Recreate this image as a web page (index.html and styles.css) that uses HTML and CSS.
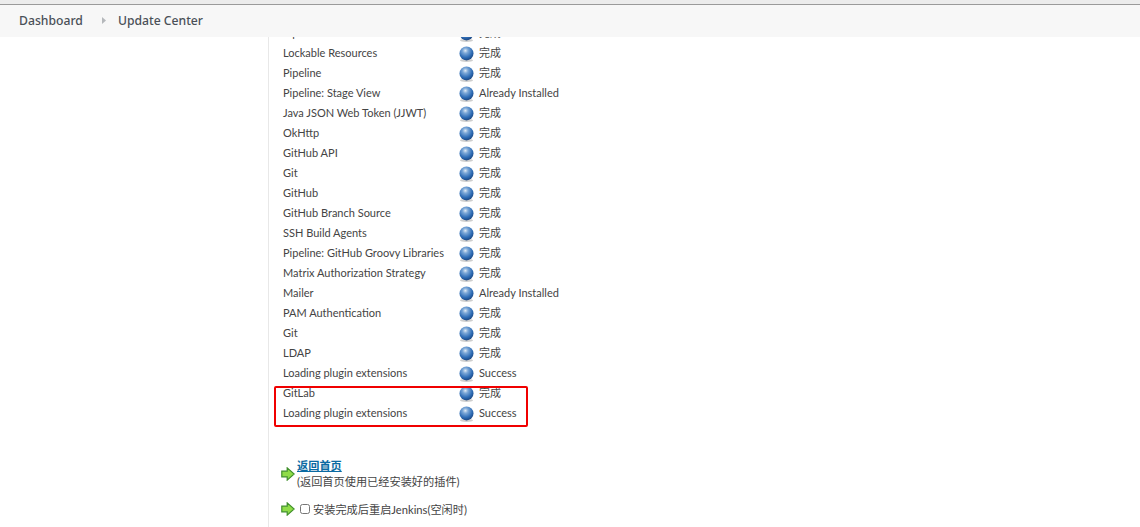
FILE: index.html
```html
<!DOCTYPE html>
<html lang="zh">
<head>
<meta charset="utf-8">
<title>Update Center</title>
<link rel="stylesheet" href="styles.css">
</head>
<body>
<div class="topstrip"></div>
<nav class="crumbs">
  <a class="crumb">Dashboard</a>
  <svg class="sep" width="4" height="7" viewBox="0 0 4 7"><path d="M0 0l4 3.5L0 7z" fill="#b5b8bb"/></svg>
  <a class="crumb">Update Center</a>
</nav>
<div class="main">
  <aside class="side"></aside>
  <section class="content">
    <svg width="0" height="0" class="defs">
      <defs>
        <radialGradient id="ball" cx="0.42" cy="0.3" r="0.75">
          <stop offset="0" stop-color="#dfeaf5"/>
          <stop offset="0.25" stop-color="#7ea9d8"/>
          <stop offset="0.65" stop-color="#2f6db6"/>
          <stop offset="1" stop-color="#173f78"/>
        </radialGradient>
        <symbol id="blue" viewBox="0 0 16 16">
          <ellipse cx="7.5" cy="14.4" rx="6.5" ry="1.5" fill="#cfcfcf"/>
          <circle cx="7.5" cy="7.4" r="7" fill="url(#ball)"/>
        </symbol>
        <symbol id="arrow" viewBox="0 0 14 14">
          <path d="M.8 4.2h5.4V.9l7 6.1-7 6.1V9.8H.8z" fill="#8fdc48" stroke="#3f8f2a" stroke-width="1.2"/>
        </symbol>
      </defs>
    </svg>
    <table class="jobs">
      <tr><td>Pipeline: API</td><td><svg class="ball"><use href="#blue"/></svg></td><td>完成</td></tr>
      <tr><td>Lockable Resources</td><td><svg class="ball"><use href="#blue"/></svg></td><td>完成</td></tr>
      <tr><td>Pipeline</td><td><svg class="ball"><use href="#blue"/></svg></td><td>完成</td></tr>
      <tr><td>Pipeline: Stage View</td><td><svg class="ball"><use href="#blue"/></svg></td><td>Already Installed</td></tr>
      <tr><td>Java JSON Web Token (JJWT)</td><td><svg class="ball"><use href="#blue"/></svg></td><td>完成</td></tr>
      <tr><td>OkHttp</td><td><svg class="ball"><use href="#blue"/></svg></td><td>完成</td></tr>
      <tr><td>GitHub API</td><td><svg class="ball"><use href="#blue"/></svg></td><td>完成</td></tr>
      <tr><td>Git</td><td><svg class="ball"><use href="#blue"/></svg></td><td>完成</td></tr>
      <tr><td>GitHub</td><td><svg class="ball"><use href="#blue"/></svg></td><td>完成</td></tr>
      <tr><td>GitHub Branch Source</td><td><svg class="ball"><use href="#blue"/></svg></td><td>完成</td></tr>
      <tr><td>SSH Build Agents</td><td><svg class="ball"><use href="#blue"/></svg></td><td>完成</td></tr>
      <tr><td>Pipeline: GitHub Groovy Libraries</td><td><svg class="ball"><use href="#blue"/></svg></td><td>完成</td></tr>
      <tr><td>Matrix Authorization Strategy</td><td><svg class="ball"><use href="#blue"/></svg></td><td>完成</td></tr>
      <tr><td>Mailer</td><td><svg class="ball"><use href="#blue"/></svg></td><td>Already Installed</td></tr>
      <tr><td>PAM Authentication</td><td><svg class="ball"><use href="#blue"/></svg></td><td>完成</td></tr>
      <tr><td>Git</td><td><svg class="ball"><use href="#blue"/></svg></td><td>完成</td></tr>
      <tr><td>LDAP</td><td><svg class="ball"><use href="#blue"/></svg></td><td>完成</td></tr>
      <tr><td>Loading plugin extensions</td><td><svg class="ball"><use href="#blue"/></svg></td><td>Success</td></tr>
      <tr><td>GitLab</td><td><svg class="ball"><use href="#blue"/></svg></td><td>完成</td></tr>
      <tr><td>Loading plugin extensions</td><td><svg class="ball"><use href="#blue"/></svg></td><td>Success</td></tr>
    </table>
    <div class="highlight"></div>
    <div class="action back">
      <svg class="arrow"><use href="#arrow"/></svg>
      <div class="action-text">
        <a class="home" href="#">返回首页</a>
        <div class="hint">(返回首页使用已经安装好的插件)</div>
      </div>
    </div>
    <div class="action restart">
      <svg class="arrow"><use href="#arrow"/></svg>
      <label class="check"><input type="checkbox">安装完成后重启Jenkins(空闲时)</label>
    </div>
  </section>
</div>
</body>
</html>
```
FILE: styles.css
```css
* { box-sizing: border-box; }
html, body { margin: 0; height: 100%; overflow: hidden; background: #fff; }
body {
  font-family: "Lato", "Noto Sans CJK SC", sans-serif;
  font-size: 11px;
  color: #444;
  display: flex;
  flex-direction: column;
}
.topstrip { height: 5px; flex: none; background: #ececec; border-bottom: 1px solid #9a9a9a; }
.crumbs {
  height: 32px;
  flex: none;
  display: flex;
  align-items: center;
  padding: 0 0 2px 19px;
  background: #f7f7f7;
  position: relative;
  z-index: 1;
}
.crumb { font-family: "Noto Sans", sans-serif; font-size: 12.2px; font-weight: 500; color: #4a5057; }
.sep { margin: 0 12px 0 19px; }
.main { flex: 1; display: flex; min-height: 0; }
.side { width: 269px; flex: none; border-right: 1px solid #e8e8e8; }
.content { position: relative; flex: 1; margin-top: -15px; padding-left: 9px; }
.defs { position: absolute; }
.jobs { border-collapse: collapse; }
.jobs tr { height: 20px; }
.jobs td { padding: 0 0 0 5px; white-space: nowrap; vertical-align: middle; }
.jobs td:first-child { width: 181px; }
.jobs td:nth-child(2) { width: 16px; padding-left: 0; line-height: 0; }
.jobs td:nth-child(3) { padding-left: 4px; }
.ball { width: 16px; height: 16px; display: block; margin-top: 3px; }
.highlight {
  position: absolute;
  left: 5px;
  top: 364px;
  width: 254px;
  height: 41px;
  border: 2px solid #f00000;
  border-radius: 2px;
}
.action { display: flex; align-items: center; font-size: 11.2px; }
.back { margin: 36px 0 0 3px; }
.restart { margin: 12px 0 0 3px; }
.arrow { width: 14px; height: 14px; flex: none; margin-right: 2px; }
.action-text { line-height: 15px; }
.home { font-weight: 700; color: #0b6aa2; text-decoration: underline; display: block; }
.hint { margin-top: 1px; }
.check { display: flex; align-items: center; }
.check input { margin: 0 3px 0 3px; width: 10px; height: 10px; }
```
